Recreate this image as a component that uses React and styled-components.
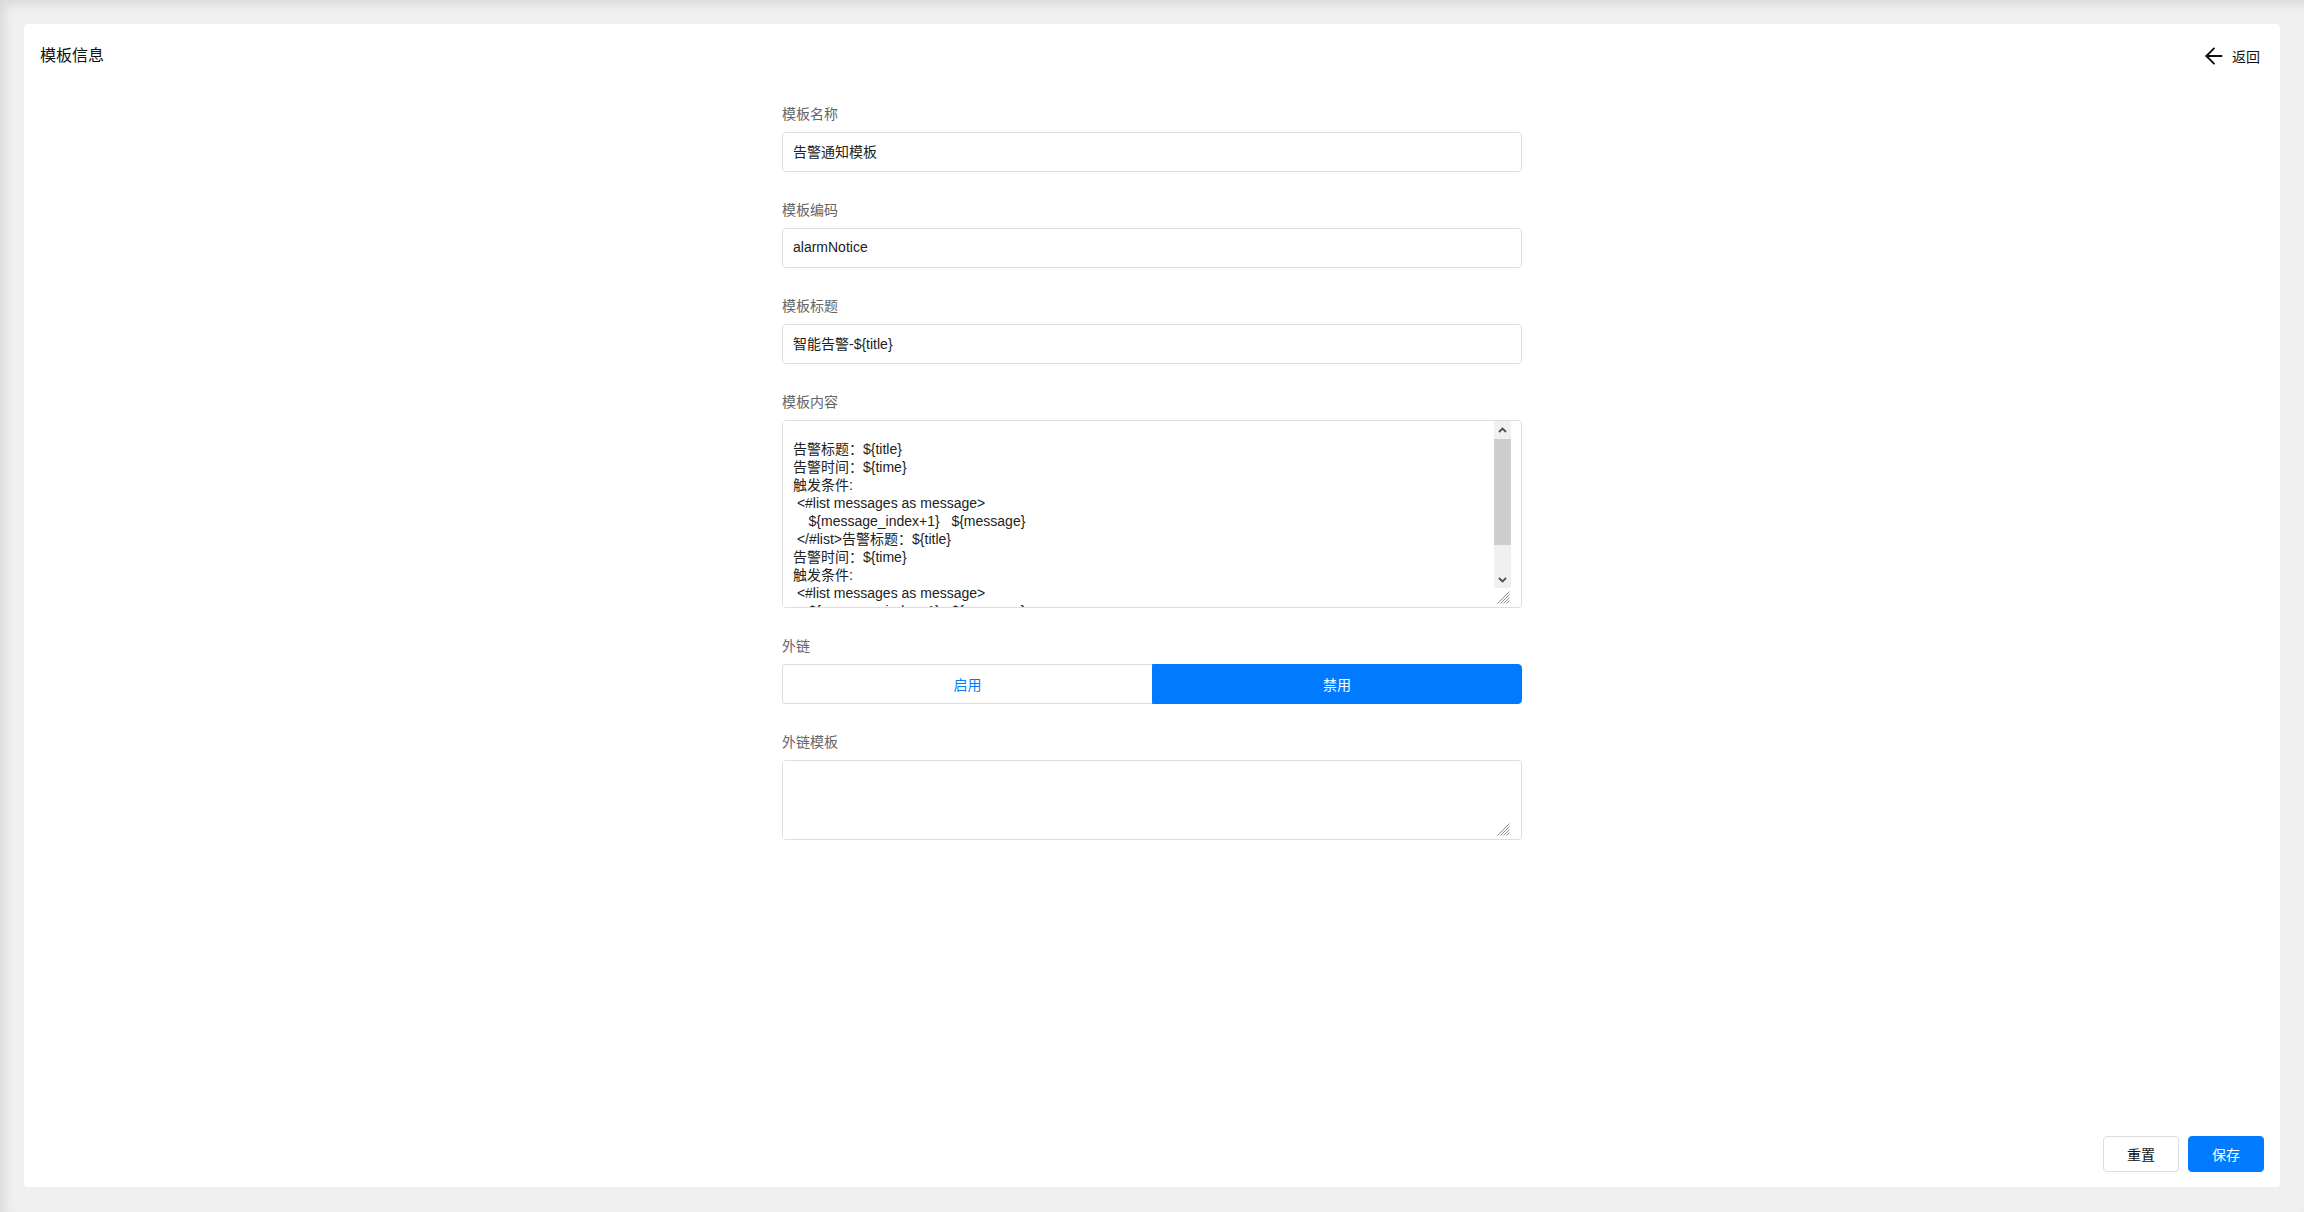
import React, { useState } from 'react';
import styled, { createGlobalStyle } from 'styled-components';
import { ArrowLeft } from 'lucide-react';

const BODY =
  '告警标题：${title}\n告警时间：${time}\n触发条件:\n <#list messages as message>\n    ${message_index+1}   ${message}\n </#list>';
const CONTENT = '\n' + BODY + BODY;

function Chevron({ up }) {
  return (
    <svg width="9" height="6" viewBox="0 0 9 6">
      <polyline
        points={up ? '1,5 4.5,1.5 8,5' : '1,1 4.5,4.5 8,1'}
        fill="none"
        stroke="#505050"
        strokeWidth="1.8"
      />
    </svg>
  );
}

function Grip() {
  return (
    <svg width="14" height="14" viewBox="0 0 14 14">
      <g stroke="#8a8a8a" strokeWidth="1">
        <line x1="13.5" y1="1.5" x2="1.5" y2="13.5" />
        <line x1="13.5" y1="4.5" x2="4.5" y2="13.5" />
        <line x1="13.5" y1="7.5" x2="7.5" y2="13.5" />
        <line x1="13.5" y1="10.5" x2="10.5" y2="13.5" />
      </g>
    </svg>
  );
}

function TextBlock({ height, value, scroll }) {
  return (
    <TextAreaBox>
      <TextArea $height={height} defaultValue={value} />
      <SideColumn>
        {scroll && (
          <>
            <ArrowButton>
              <Chevron up />
            </ArrowButton>
            <Track>
              <Thumb />
            </Track>
            <ArrowButton>
              <Chevron />
            </ArrowButton>
          </>
        )}
        <Corner>
          <Grip />
        </Corner>
      </SideColumn>
    </TextAreaBox>
  );
}

export default function App() {
  const [link, setLink] = useState('off');

  return (
    <Page>
      <GlobalStyle />
      <Card>
        <Header>
          <Title>模板信息</Title>
          <BackLink type="button">
            <ArrowLeft size={26} strokeWidth={1.8} />
            返回
          </BackLink>
        </Header>

        <Form>
          <Field>
            <Label>模板名称</Label>
            <TextInput defaultValue="告警通知模板" />
          </Field>
          <Field>
            <Label>模板编码</Label>
            <TextInput defaultValue="alarmNotice" />
          </Field>
          <Field>
            <Label>模板标题</Label>
            <TextInput defaultValue="智能告警-${title}" />
          </Field>
          <Field>
            <Label>模板内容</Label>
            <TextBlock height={186} value={CONTENT} scroll />
          </Field>
          <Field>
            <Label>外链</Label>
            <Toggle>
              <ToggleButton type="button" $active={link === 'on'} onClick={() => setLink('on')}>
                启用
              </ToggleButton>
              <ToggleButton type="button" $active={link === 'off'} onClick={() => setLink('off')}>
                禁用
              </ToggleButton>
            </Toggle>
          </Field>
          <Field>
            <Label>外链模板</Label>
            <TextBlock height={78} value="" />
          </Field>
        </Form>

        <Footer>
          <ActionButton type="button">重置</ActionButton>
          <ActionButton type="button" $primary>
            保存
          </ActionButton>
        </Footer>
      </Card>
    </Page>
  );
}

const GlobalStyle = createGlobalStyle`
  * {
    box-sizing: border-box;
  }
  html, body {
    margin: 0;
    padding: 0;
    height: 100%;
  }
  body {
    font-family: "Liberation Sans", "Noto Sans CJK SC", sans-serif;
    font-size: 14px;
    color: #222;
  }
  #root {
    height: 100%;
  }
`;

const Page = styled.div`
  display: flex;
  height: 100vh;
  padding: 24px 24px 25px;
  background: #f0f0f0;
  box-shadow: inset 6px 6px 12px -2px rgba(0, 0, 0, 0.1);
`;

const Card = styled.div`
  flex: 1;
  display: flex;
  flex-direction: column;
  background: #fff;
  border-radius: 4px;
`;

const Header = styled.div`
  display: flex;
  align-items: center;
  justify-content: space-between;
  padding: 16px 20px 16px 16px;
`;

const Title = styled.h2`
  margin: 0;
  font-size: 16px;
  font-weight: normal;
  line-height: 32px;
  color: #111;
`;

const BackLink = styled.button`
  display: flex;
  align-items: center;
  gap: 5px;
  padding: 0;
  border: none;
  background: none;
  font-family: inherit;
  font-size: 14px;
  color: #111;
  cursor: pointer;
`;

const Form = styled.div`
  width: 740px;
  margin: 0 auto;
  padding-top: 17px;
`;

const Field = styled.div`
  margin-bottom: 29px;
`;

const Label = styled.label`
  display: block;
  margin-bottom: 9px;
  font-size: 14px;
  line-height: 18px;
  color: #666;
`;

const TextInput = styled.input`
  display: block;
  width: 100%;
  height: 40px;
  padding: 0 10px 2px;
  border: 1px solid #dedede;
  border-radius: 4px;
  font-family: inherit;
  font-size: 14px;
  color: #222;
  outline: none;
`;

const TextAreaBox = styled.div`
  display: flex;
  padding-right: 10px;
  border: 1px solid #dedede;
  border-radius: 4px;
  background: #fff;
`;

const TextArea = styled.textarea`
  flex: 1;
  display: block;
  min-width: 0;
  height: ${(p) => p.$height}px;
  padding: 1px 0 0 10px;
  border: none;
  font-family: inherit;
  font-size: 14px;
  line-height: 18px;
  color: #222;
  white-space: pre-wrap;
  resize: none;
  outline: none;
  scrollbar-width: none;
`;

const SideColumn = styled.div`
  display: flex;
  flex-direction: column;
  justify-content: flex-end;
  width: 17px;
  padding-bottom: 2px;
`;

const ArrowButton = styled.div`
  display: flex;
  align-items: center;
  justify-content: center;
  height: 17px;
  background: #f0f0f0;
`;

const Track = styled.div`
  flex: 1;
  padding-top: 1px;
  background: #f0f0f0;
`;

const Thumb = styled.div`
  height: 106px;
  background: #cdcdcd;
`;

const Corner = styled.div`
  display: flex;
  align-items: flex-end;
  justify-content: flex-end;
  height: 17px;
  padding: 0 1px 1px 0;
`;

const Toggle = styled.div`
  display: grid;
  grid-template-columns: 1fr 1fr;
  height: 40px;
`;

const ToggleButton = styled.button`
  border: 1px solid ${(p) => (p.$active ? '#007bff' : '#dedede')};
  background: ${(p) => (p.$active ? '#007bff' : '#fff')};
  color: ${(p) => (p.$active ? '#fff' : '#007bff')};
  font-family: inherit;
  font-size: 14px;
  cursor: pointer;

  &:first-child {
    border-radius: 4px 0 0 4px;
    border-right: none;
  }
  &:last-child {
    border-radius: 0 4px 4px 0;
  }
`;

const Footer = styled.div`
  display: flex;
  justify-content: flex-end;
  gap: 9px;
  margin-top: auto;
  padding: 0 16px 15px;
`;

const ActionButton = styled.button`
  width: 76px;
  height: 36px;
  border: 1px solid ${(p) => (p.$primary ? '#007bff' : '#dedede')};
  border-radius: 4px;
  background: ${(p) => (p.$primary ? '#007bff' : '#fff')};
  color: ${(p) => (p.$primary ? '#fff' : '#111')};
  font-family: inherit;
  font-size: 14px;
  cursor: pointer;
`;
